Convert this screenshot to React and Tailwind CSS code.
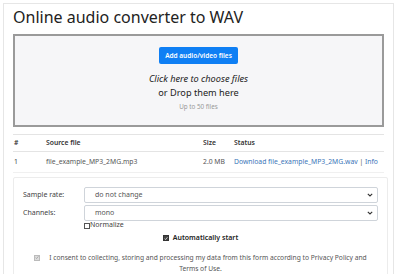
import React from "react";

const font = { fontFamily: '"Noto Sans", "Open Sans", Arial, sans-serif' };

function Chevron() {
  return (
    <svg width="6" height="4" viewBox="0 0 6 4" className="shrink-0">
      <path d="M0.8 0.8 L3 3 L5.2 0.8" fill="none" stroke="#333" strokeWidth="1.1" />
    </svg>
  );
}

function Select({ value }) {
  return (
    <div className="flex-1 h-[16px] flex items-center justify-between border border-[#cfd4da] rounded-[2px] pl-[10px] pr-[4px] text-[7px] text-[#555] bg-white">
      <span>{value}</span>
      <Chevron />
    </div>
  );
}

function Check({ checked, muted }) {
  return (
    <span
      className={
        "inline-flex items-center justify-center w-[6px] h-[6px] border align-middle " +
        (muted ? "border-[#bbb] bg-[#ddd]" : checked ? "border-[#333] bg-[#444]" : "border-[#555] bg-white")
      }
    >
      {checked && (
        <svg width="5" height="5" viewBox="0 0 5 5">
          <path d="M0.8 2.6 L2 3.8 L4.3 1" fill="none" stroke={muted ? "#999" : "#fff"} strokeWidth="0.9" />
        </svg>
      )}
    </span>
  );
}

export default function App() {
  return (
    <div className="w-[400px] h-[274px] overflow-hidden bg-white" style={font}>
      <div className="mt-[3px] ml-[3px] w-[391px] h-[300px] border border-[#e6e6e6] px-[9px] pt-[2px]">
        {/* Header */}
        <h1 className="text-[16px] leading-[22px] text-[#222] mb-[6px]">
          Online audio converter to WAV
        </h1>

        {/* Drop zone */}
        <div className="h-[93px] border-2 border-[#9a9a9a] bg-[#f6f6f8] flex flex-col items-center pt-[11px]">
          <button className="h-[17px] px-[6px] bg-[#0f7ff4] text-white text-[6.5px] font-semibold rounded-[2px]">
            Add audio/video files
          </button>
          <div className="mt-[8px] text-[9.2px] leading-[14px] italic text-[#222]">
            Click here to choose files
          </div>
          <div className="text-[9.2px] leading-[14px] text-[#222]">or Drop them here</div>
          <div className="text-[6.3px] leading-[14px] text-[#999]">Up to 50 files</div>
        </div>

        {/* Table */}
        <table className="w-full mt-[7px] text-[6.8px] border-t border-[#e4e4e4]">
          <thead>
            <tr className="border-b border-[#e4e4e4] text-[#333] h-[17px]">
              <th className="text-left font-semibold pl-[1px] w-[33px]">#</th>
              <th className="text-left font-semibold w-[157px]">Source file</th>
              <th className="text-left font-semibold w-[31px]">Size</th>
              <th className="text-left font-semibold">Status</th>
            </tr>
          </thead>
          <tbody>
            <tr className="h-[21px] text-[#555] border-b border-[#f0f0f0]">
              <td className="pl-[1px] text-[#444]">1</td>
              <td>file_example_MP3_2MG.mp3</td>
              <td>2.0 MB</td>
              <td className="whitespace-nowrap">
                <span className="text-[#3a75b8]">Download file_example_MP3_2MG.wav</span>
                <span className="text-[#555]"> | </span>
                <span className="text-[#3a75b8]">Info</span>
              </td>
            </tr>
          </tbody>
        </table>

        {/* Options */}
        <div className="mt-[4px] w-[375px] border border-[#ececec] rounded-[2px] px-[9px] pt-[9px] pb-[8px] text-[7px] text-[#444]">
          <div className="flex items-center mb-[2px]">
            <span className="w-[61px]">Sample rate:</span>
            <Select value="do not change" />
          </div>
          <div className="flex items-center">
            <span className="w-[61px]">Channels:</span>
            <Select value="mono" />
          </div>
          <div className="pl-[61px] flex items-center h-[9px]">
            <Check />
            <span className="text-[#444]">Normalize</span>
          </div>
          <div className="flex items-center justify-center gap-[4px] mt-[3px] font-semibold text-[#222]">
            <Check checked />
            <span>Automatically start</span>
          </div>
          <p className="mt-[8px] -mx-[4px] text-center text-[6.7px] leading-[11px] text-[#555] whitespace-nowrap">
            <span className="mr-[9px]">
              <Check checked muted />
            </span>
            I consent to collecting, storing and processing my data from this form according to Privacy Policy and
            <br />
            Terms of Use.
          </p>
        </div>
      </div>
    </div>
  );
}
